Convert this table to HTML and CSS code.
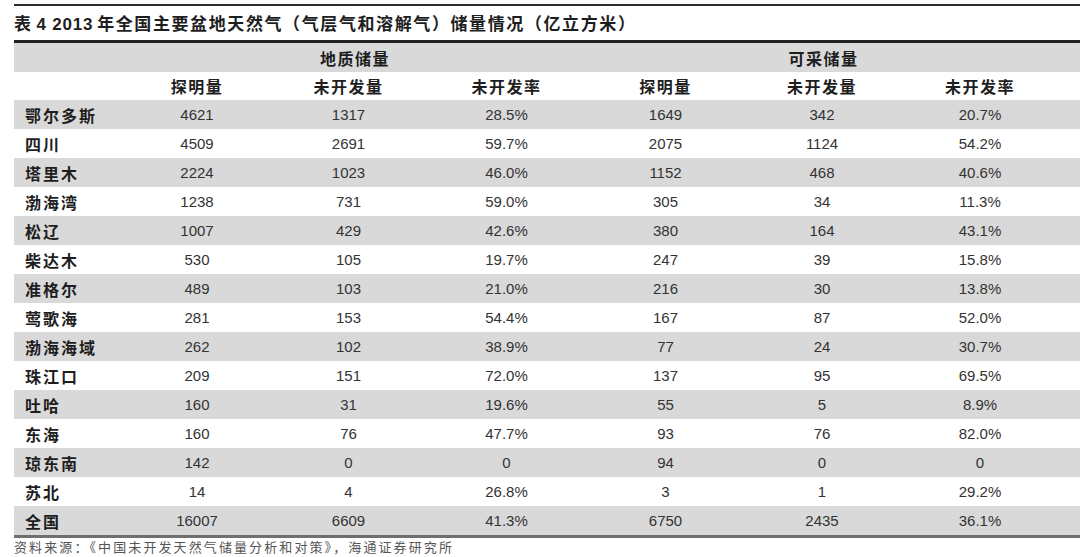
FILE: index.html
```html
<!DOCTYPE html>
<html lang="zh-CN">
<head>
<meta charset="utf-8">
<title>表4 2013年全国主要盆地天然气储量情况</title>
<link rel="stylesheet" href="styles.css">
</head>
<body>
<div class="page">
  <div class="title"><span class="cjk">表</span> <span class="lat">4 2013</span> <span class="cjk">年全国主要盆地天然气（气层气和溶解气）储量情况（亿立方米）</span></div>
  <div class="table-wrap">
  <table class="data">
    <colgroup>
      <col class="c0"><col class="c1"><col class="c2"><col class="c3"><col class="c4"><col class="c5"><col class="c6">
    </colgroup>
    <thead>
      <tr class="group">
        <th></th>
        <th colspan="3">地质储量</th>
        <th colspan="3" class="last">可采储量</th>
      </tr>
      <tr class="sub">
        <th></th>
        <th>探明量</th><th>未开发量</th><th>未开发率</th>
        <th>探明量</th><th>未开发量</th><th class="last">未开发率</th>
      </tr>
    </thead>
    <tbody>
      <tr class="g"><th>鄂尔多斯</th><td>4621</td><td>1317</td><td>28.5%</td><td>1649</td><td>342</td><td class="last">20.7%</td></tr>
      <tr><th>四川</th><td>4509</td><td>2691</td><td>59.7%</td><td>2075</td><td>1124</td><td class="last">54.2%</td></tr>
      <tr class="g"><th>塔里木</th><td>2224</td><td>1023</td><td>46.0%</td><td>1152</td><td>468</td><td class="last">40.6%</td></tr>
      <tr><th>渤海湾</th><td>1238</td><td>731</td><td>59.0%</td><td>305</td><td>34</td><td class="last">11.3%</td></tr>
      <tr class="g"><th>松辽</th><td>1007</td><td>429</td><td>42.6%</td><td>380</td><td>164</td><td class="last">43.1%</td></tr>
      <tr><th>柴达木</th><td>530</td><td>105</td><td>19.7%</td><td>247</td><td>39</td><td class="last">15.8%</td></tr>
      <tr class="g"><th>准格尔</th><td>489</td><td>103</td><td>21.0%</td><td>216</td><td>30</td><td class="last">13.8%</td></tr>
      <tr><th>莺歌海</th><td>281</td><td>153</td><td>54.4%</td><td>167</td><td>87</td><td class="last">52.0%</td></tr>
      <tr class="g"><th>渤海海域</th><td>262</td><td>102</td><td>38.9%</td><td>77</td><td>24</td><td class="last">30.7%</td></tr>
      <tr><th>珠江口</th><td>209</td><td>151</td><td>72.0%</td><td>137</td><td>95</td><td class="last">69.5%</td></tr>
      <tr class="g"><th>吐哈</th><td>160</td><td>31</td><td>19.6%</td><td>55</td><td>5</td><td class="last">8.9%</td></tr>
      <tr><th>东海</th><td>160</td><td>76</td><td>47.7%</td><td>93</td><td>76</td><td class="last">82.0%</td></tr>
      <tr class="g"><th>琼东南</th><td>142</td><td>0</td><td>0</td><td>94</td><td>0</td><td class="last">0</td></tr>
      <tr><th>苏北</th><td>14</td><td>4</td><td>26.8%</td><td>3</td><td>1</td><td class="last">29.2%</td></tr>
      <tr class="g total"><th>全国</th><td>16007</td><td>6609</td><td>41.3%</td><td>6750</td><td>2435</td><td class="last">36.1%</td></tr>
    </tbody>
  </table>
  </div>
  <div class="source">资料来源：《中国未开发天然气储量分析和对策》，海通证券研究所</div>
</div>
</body>
</html>
```
FILE: styles.css
```css
html, body {
  margin: 0;
  padding: 0;
  background: #ffffff;
}

.page {
  padding: 4px 0 0 14px;
  width: 1066px;
}

.title {
  border-top: 2px solid #2b2b2b;
  height: 34px;
  line-height: 34px;
  font-family: "Noto Sans CJK SC", "Liberation Sans", sans-serif;
  font-size: 17px;
  font-weight: 700;
  color: #1e1e1e;
  white-space: nowrap;
}

.title .cjk {
  letter-spacing: 1.6px;
}

.title .lat {
  font-family: "Liberation Sans", Arial, sans-serif;
  font-size: 17px;
  font-weight: 700;
  letter-spacing: 0.8px;
}

.table-wrap {
  border-top: 3px solid #222222;
  border-bottom: 3px solid #6f6f6f;
}

.data {
  width: 1066px;
  border-collapse: collapse;
  table-layout: fixed;
}

.c0 { width: 109px; }
.c1 { width: 148px; }
.c2 { width: 155px; }
.c3 { width: 161px; }
.c4 { width: 157px; }
.c5 { width: 156px; }
.c6 { width: 180px; }

.data th,
.data td {
  padding: 0;
  text-align: center;
  vertical-align: middle;
  white-space: nowrap;
}

.data th {
  font-family: "Noto Sans CJK SC", sans-serif;
  font-size: 16px;
  font-weight: 700;
  color: #1e1e1e;
  letter-spacing: 1.5px;
}

.data td {
  font-family: "Liberation Sans", Arial, sans-serif;
  font-size: 15px;
  color: #333333;
}

.data .last {
  padding-right: 20px;
}

.group {
  height: 29px;
  background: #d9d9d9;
}

.sub {
  height: 28px;
  background: #ffffff;
}

tbody tr {
  height: 29px;
}

tbody tr.g {
  background: #d9d9d9;
}

.data tbody th {
  text-align: left;
  padding-left: 11px;
  letter-spacing: 2px;
}

.source {
  height: 18px;
  line-height: 18px;
  font-family: "Noto Sans CJK SC", sans-serif;
  font-size: 13px;
  color: #555555;
  letter-spacing: 2.1px;
  white-space: nowrap;
}
```
